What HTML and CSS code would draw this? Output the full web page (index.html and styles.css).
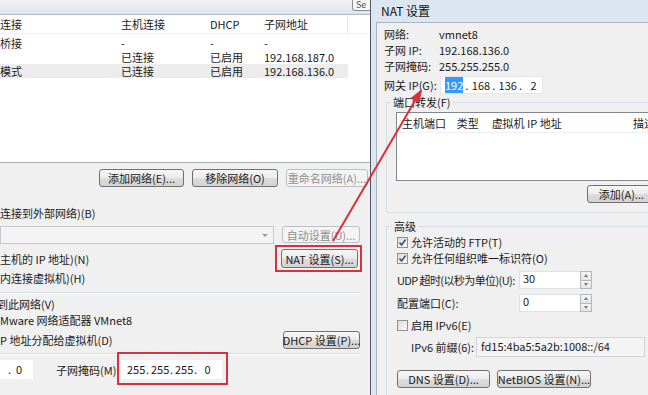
FILE: index.html
```html
<!DOCTYPE html>
<html>
<head>
    <meta charset="utf-8">
    <title>虚拟网络编辑器 - NAT 设置</title>
    <link rel="stylesheet" href="styles.css">
</head>
<body>
    <!-- 虚拟网络编辑器（左侧被裁切） -->
    <div class="win win-left">
        <div class="topbar"><span class="top-btn">Se</span></div>
        <div class="netlist">
            <div class="nl-row nl-head">
                <span class="c1">连接</span><span class="c2">主机连接</span><span class="c3">DHCP</span><span class="c4">子网地址</span>
            </div>
            <div class="nl-body">
                <div class="nl-row"><span class="c1">桥接</span><span class="c2">-</span><span class="c3">-</span><span class="c4">-</span></div>
                <div class="nl-row"><span class="c1"></span><span class="c2">已连接</span><span class="c3">已启用</span><span class="c4">192.168.187.0</span></div>
                <div class="nl-row sel"><span class="c1">模式</span><span class="c2">已连接</span><span class="c3">已启用</span><span class="c4">192.168.136.0</span></div>
            </div>
        </div>

        <div class="btn-row">
            <button class="btn w85">添加网络(E)...</button>
            <button class="btn w86">移除网络(O)</button>
            <button class="btn w82" disabled>重命名网络(A)...</button>
        </div>

        <div class="line mt19">连接到外部网络)(B)</div>
        <div class="combo-row">
            <div class="combo"><span class="combo-arrow"></span></div>
            <button class="btn w78" disabled>自动设置(U)...</button>
        </div>
        <div class="split-row nat-row">
            <span>主机的 IP 地址)(N)</span>
            <button class="btn w77">NAT 设置(S)...</button>
        </div>
        <div class="line mt3">内连接虚拟机)(H)</div>
        <div class="sep mt7"></div>
        <div class="line mt3 cut">到此网络(V)</div>
        <div class="line mt2">Mware 网络适配器 VMnet8</div>
        <div class="split-row dhcp-row">
            <span>P 地址分配给虚拟机(D)</span>
            <button class="btn w77">DHCP 设置(P)...</button>
        </div>
        <div class="sep mt4"></div>
        <div class="ip-row">
            <div class="edit small-ip">.&nbsp;&nbsp;0</div>
            <span class="mask-label">子网掩码(M):</span>
            <div class="edit mask-ip">
                <span class="oct">255</span><span class="dot">.</span><span class="oct">255</span><span class="dot">.</span><span class="oct">255</span><span class="dot">.</span><span class="oct">0</span>
            </div>
        </div>
    </div>

    <!-- NAT 设置 对话框 -->
    <div class="win win-nat">
        <div class="nat-title">NAT 设置</div>
        <div class="nat-body">
            <div class="info"><span class="info-k">网络:</span><span>vmnet8</span></div>
            <div class="info"><span class="info-k">子网 IP:</span><span>192.168.136.0</span></div>
            <div class="info"><span class="info-k">子网掩码:</span><span>255.255.255.0</span></div>
            <div class="gw-row">
                <span class="gw-k">网关 IP(G):</span>
                <div class="gw-ip">
                    <span class="oct"><span class="hl">192</span></span><span class="dot">.</span><span class="oct">168</span><span class="dot">.</span><span class="oct">136</span><span class="dot">.</span><span class="oct">2</span>
                </div>
            </div>

            <div class="group g-port">
                <div class="g-title">端口转发(F)</div>
                <div class="pf-table">
                    <div class="pf-head">
                        <span class="p1">主机端口</span><span class="p2">类型</span><span class="p3">虚拟机 IP 地址</span><span class="p4">描述</span>
                    </div>
                </div>
                <div class="g-btns"><button class="btn w69">添加(A)...</button></div>
            </div>

            <div class="group g-adv">
                <div class="g-title">高级</div>
                <div class="chk-row mt2"><span class="chk on"><svg viewBox="0 0 9 9"><path d="M1.5 4.5 L3.6 7 L7.6 1.6" /></svg></span>允许活动的 FTP(T)</div>
                <div class="chk-row mt2"><span class="chk on"><svg viewBox="0 0 9 9"><path d="M1.5 4.5 L3.6 7 L7.6 1.6" /></svg></span>允许任何组织唯一标识符(O)</div>
                <div class="spin-row mt6">
                    <span class="spin-k tight">UDP 超时(以秒为单位)(U):</span>
                    <div class="num">30</div>
                    <div class="spin"><span class="up"></span><span class="down"></span></div>
                </div>
                <div class="spin-row mt5">
                    <span class="spin-k">配置端口(C):</span>
                    <div class="num">0</div>
                    <div class="spin"><span class="up"></span><span class="down"></span></div>
                </div>
                <div class="chk-row mt6"><span class="chk"></span>启用 IPv6(E)</div>
                <div class="v6-row">
                    <span class="v6-k">IPv6 前缀(6):</span>
                    <div class="v6-val">fd15:4ba5:5a2b:1008::/64</div>
                </div>
                <div class="foot-btns">
                    <button class="btn w93">DNS 设置(D)...</button>
                    <button class="btn w94">NetBIOS 设置(N)...</button>
                </div>
            </div>
        </div>
    </div>

    <!-- 标注 -->
    <div class="mark mark-nat"></div>
    <div class="mark mark-mask"></div>
    <svg class="arrow" width="648" height="395" viewBox="0 0 648 395">
        <line x1="333" y1="241" x2="416" y2="99" />
        <polygon points="422,89 419.7,102.7 411.1,97.7" />
    </svg>
</body>
</html>
```

FILE: styles.css
```css
* {
    box-sizing: border-box;
}

body {
    margin: 0;
    width: 648px;
    height: 395px;
    overflow: hidden;
    position: relative;
    background-color: #f0f0f0;
    color: #1a1a1a;
    font-family: "Noto Sans CJK SC", "Liberation Sans", sans-serif;
    font-size: 11px;
    line-height: 14px;
}

button {
    font: inherit;
}

.mt2 { margin-top: 2px; }
.mt3 { margin-top: 3px; }
.mt4 { margin-top: 4px; }
.mt5 { margin-top: 5px; }
.mt6 { margin-top: 6px; }
.mt7 { margin-top: 7px; }
.mt19 { margin-top: 19px; }

.w69 { width: 69px; }
.w77 { width: 77px; }
.w78 { width: 78px; }
.w82 { width: 82px; }
.w85 { width: 85px; }
.w86 { width: 86px; }
.w93 { width: 93px; }
.w94 { width: 94px; }

/* 窗口 */
.win {
    position: absolute;
    top: 0;
    height: 395px;
    overflow: hidden;
}

.btn {
    display: flex;
    align-items: center;
    justify-content: center;
    height: 18px;
    padding: 0;
    border: 1px solid #707070;
    border-radius: 3px;
    background: linear-gradient(#f6f6f6 0%, #ececec 48%, #dddddd 52%, #d2d2d2 100%);
    color: #1a1a1a;
    line-height: 16px;
    white-space: nowrap;
}

.btn:disabled {
    border-color: #bcc0c4;
    background: #f4f4f4;
    color: #8e8e8e;
}

/* 左侧：虚拟网络编辑器 */
.win-left {
    left: 0;
    width: 370px;
    background-color: #f0f0f0;
}

.topbar {
    height: 15px;
    display: flex;
    justify-content: flex-end;
    background: linear-gradient(#eef2f6, #dfe5eb);
    border-bottom: 1px solid #b3b9c0;
}

.top-btn {
    width: 18px;
    height: 11px;
    padding-left: 3px;
    border: 1px solid #8c9197;
    border-top: none;
    border-right: none;
    border-radius: 0 0 0 3px;
    background-color: #f6f6f6;
    color: #555;
    font-size: 9px;
    line-height: 9px;
    overflow: hidden;
}

.netlist {
    height: 148px;
    background-color: #fff;
    border-bottom: 1px solid #a9aeb4;
}

.nl-row {
    display: flex;
    height: 14px;
    line-height: 14px;
    white-space: nowrap;
}

.nl-head {
    height: 19px;
    line-height: 19px;
    border-bottom: 1px solid #eef0f2;
}

.nl-head .c4 {
    border-right: 1px solid #e3e5e8;
}

.nl-body {
    padding-top: 2px;
}

.nl-row .c1 { width: 121px; }
.nl-row .c2 { width: 89px; }
.nl-row .c3 { width: 54px; }
.nl-row .c4 { width: 84px; }

.nl-row.sel {
    width: 348px;
    background-color: #ececec;
}

.btn-row {
    display: flex;
    justify-content: flex-end;
    gap: 8px;
    margin-top: 6px;
    padding-right: 2px;
}

.line {
    height: 14px;
    white-space: nowrap;
}

.line.cut {
    margin-left: -3px;
}

.combo-row {
    display: flex;
    gap: 8px;
    margin-top: 6px;
    height: 18px;
}

.combo {
    position: relative;
    width: 274px;
    height: 18px;
    border: 1px solid #c5c8cc;
    background-color: #f4f4f4;
}

.combo-arrow {
    position: absolute;
    right: 5px;
    top: 7px;
    border-left: 3px solid transparent;
    border-right: 3px solid transparent;
    border-top: 3px solid #9a9a9a;
}

.combo-row .btn {
    height: 17px;
}

.split-row {
    display: flex;
    justify-content: space-between;
    align-items: center;
    white-space: nowrap;
}

.nat-row {
    margin-top: 5px;
    height: 19px;
    padding-right: 12px;
}

.nat-row .btn {
    height: 19px;
}

.dhcp-row {
    margin-top: 4px;
    height: 18px;
    padding-right: 10px;
}

.sep {
    width: 360px;
    height: 2px;
    border-top: 1px solid #d5dfe5;
    border-bottom: 1px solid #fff;
}

.ip-row {
    display: flex;
    align-items: center;
    margin-top: 5px;
    height: 19px;
}

.edit {
    height: 19px;
    background-color: #fff;
    line-height: 18px;
    white-space: nowrap;
}

.small-ip {
    width: 33px;
    padding-left: 8px;
}

.mask-label {
    margin-left: 23px;
    width: 65px;
    white-space: nowrap;
}

.mask-ip {
    display: flex;
    width: 101px;
    padding-left: 6px;
}

.mask-ip .oct {
    width: 17px;
    text-align: center;
}

.mask-ip .dot {
    width: 7px;
    text-align: center;
}

/* 右侧：NAT 设置 */
.win-nat {
    left: 370px;
    width: 278px;
    border-left: 1px solid #4e5864;
    background-color: #dce6f1;
}

.nat-title {
    height: 22px;
    padding-left: 10px;
    line-height: 22px;
    font-size: 12px;
    color: #111;
}

.nat-body {
    height: 373px;
    margin-left: 5px;
    padding-left: 7px;
    border-top: 1px solid #a9b4c0;
    border-left: 1px solid #a9b4c0;
    background-color: #f0f0f0;
}

.info {
    display: flex;
    height: 16px;
    line-height: 16px;
}

.info:first-child {
    margin-top: 3px;
}

.info-k {
    width: 55px;
}

.gw-row {
    display: flex;
    align-items: center;
    margin-top: 2px;
    height: 18px;
}

.gw-k {
    width: 56px;
    white-space: nowrap;
}

.gw-ip {
    display: flex;
    width: 103px;
    height: 18px;
    padding-left: 4px;
    border: 1px solid #e3e5e9;
    background-color: #fff;
    line-height: 16px;
}

.gw-ip .oct {
    width: 17px;
    text-align: center;
}

.gw-ip .dot {
    width: 10px;
    text-align: center;
}

.hl {
    background-color: #3399ff;
    color: #fff;
}

.group {
    width: 280px;
    margin-left: 2px;
    padding: 0 9px 9px 9px;
    border: 1px solid #d5dfe5;
}

.g-title {
    width: max-content;
    height: 14px;
    margin: -8px 0 0 -5px;
    padding: 0 2px;
    background-color: #f0f0f0;
    line-height: 14px;
}

.g-port {
    margin-top: 8px;
}

.pf-table {
    height: 69px;
    margin-top: 3px;
    border: 1px solid #828790;
    background-color: #fff;
}

.pf-head {
    display: flex;
    height: 20px;
    line-height: 20px;
    border-bottom: 1px solid #eef0f2;
    white-space: nowrap;
}

.pf-head span {
    padding-left: 5px;
}

.pf-head .p1 { width: 55px; }
.pf-head .p2 { width: 35px; }
.pf-head .p3 { width: 142px; }

.g-btns {
    display: flex;
    justify-content: flex-end;
    margin-top: 4px;
}

.g-adv {
    height: 200px;
    margin-top: 13px;
    padding-left: 10px;
}

.chk-row {
    display: flex;
    align-items: center;
    height: 14px;
    white-space: nowrap;
}

.chk {
    width: 11px;
    height: 11px;
    margin-right: 3px;
    border: 1px solid #8e8f8f;
    background: linear-gradient(135deg, #dcdcdc, #fbfbfb);
}

.chk svg {
    display: block;
    width: 9px;
    height: 9px;
}

.chk path {
    fill: none;
    stroke: #3a4f6e;
    stroke-width: 1.6;
}

.spin-row {
    display: flex;
    align-items: center;
    height: 18px;
}

.spin-k {
    width: 122px;
    white-space: nowrap;
}

.spin-k.tight {
    letter-spacing: -0.6px;
}

.num {
    width: 61px;
    height: 18px;
    padding-left: 3px;
    border: 1px solid #dfe1e5;
    border-right: none;
    background-color: #fff;
    line-height: 13px;
}

.spin {
    display: flex;
    flex-direction: column;
    width: 12px;
    height: 18px;
}

.spin span {
    position: relative;
    flex: 1;
    border: 1px solid #b4b7bb;
    background: linear-gradient(#f6f6f6, #e4e4e4);
}

.spin .down {
    border-top: none;
}

.spin span::after {
    content: "";
    position: absolute;
    left: 3px;
    top: 2px;
    border-left: 2px solid transparent;
    border-right: 2px solid transparent;
}

.spin .up::after {
    border-bottom: 3px solid #777;
}

.spin .down::after {
    top: 2px;
    border-top: 3px solid #777;
}

.v6-row {
    display: flex;
    align-items: center;
    margin-top: 5px;
    height: 20px;
    padding-left: 14px;
}

.v6-k {
    width: 65px;
    white-space: nowrap;
}

.v6-val {
    width: 169px;
    height: 20px;
    padding-left: 4px;
    border: 1px solid #d2d4d8;
    background-color: #f4f4f4;
    line-height: 17px;
    white-space: nowrap;
}

.foot-btns {
    display: flex;
    gap: 7px;
    margin-top: 13px;
}

/* 红色标注框和箭头 */
.mark {
    position: absolute;
    border: 2px solid #d8303c;
}

.mark-nat {
    left: 275px;
    top: 245px;
    width: 87px;
    height: 27px;
}

.mark-mask {
    left: 117px;
    top: 352px;
    width: 111px;
    height: 33px;
}

.arrow {
    position: absolute;
    left: 0;
    top: 0;
    pointer-events: none;
}

.arrow line {
    stroke: #d8303c;
    stroke-width: 2;
}

.arrow polygon {
    fill: #d8303c;
}
```
